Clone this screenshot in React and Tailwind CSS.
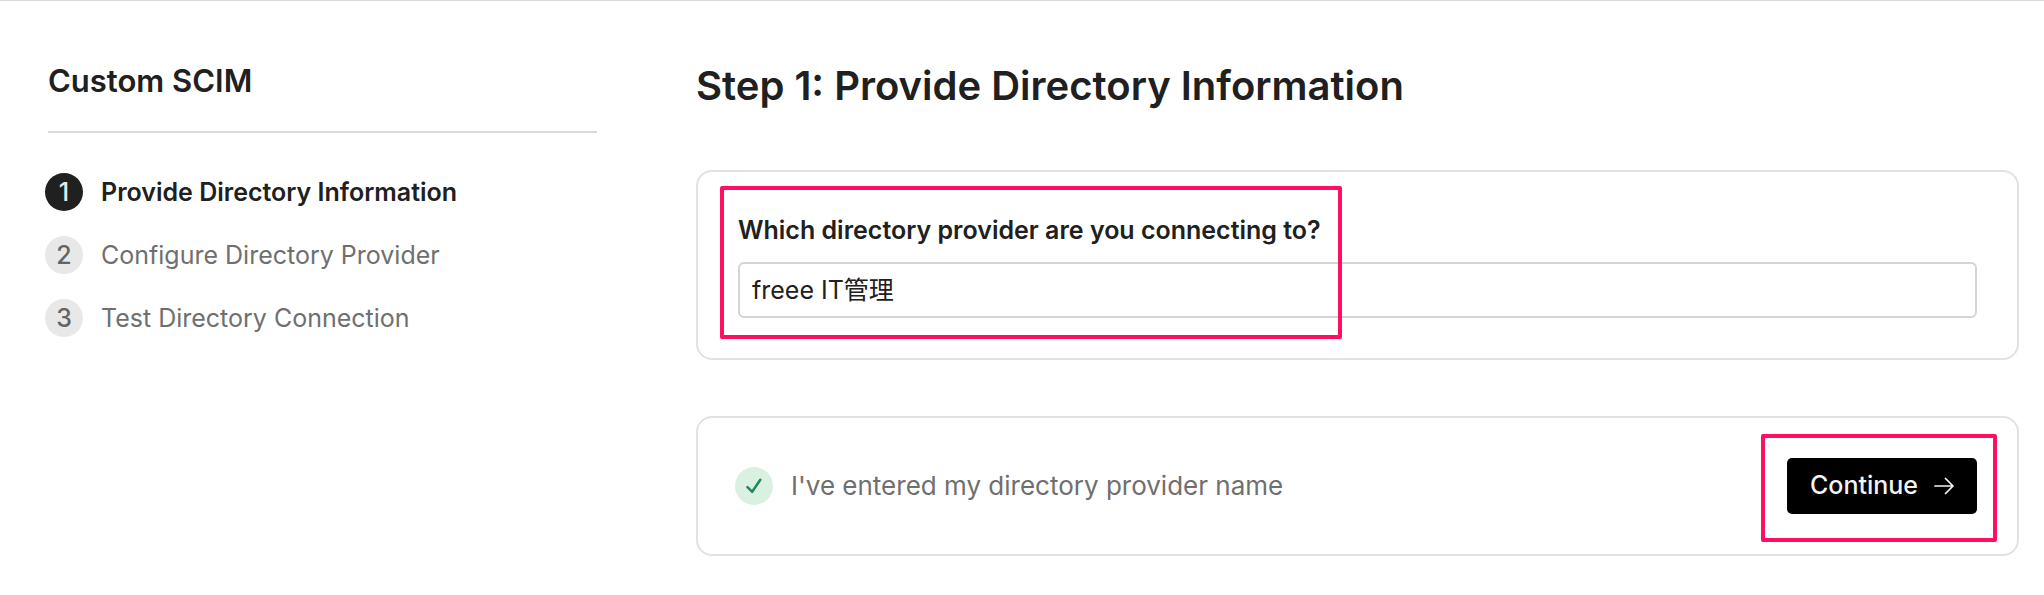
import React, { useState } from 'react';

const steps = [
  { number: 1, name: 'Provide Directory Information' },
  { number: 2, name: 'Configure Directory Provider' },
  { number: 3, name: 'Test Directory Connection' },
];

const StepLink = ({ step, active }) => (
  <a
    href={`#step-${step.number}`}
    aria-current={active ? 'step' : undefined}
    className={`flex items-center gap-[18px] text-[25px] leading-[38px] ${
      active ? 'font-semibold text-[#202020]' : 'text-[#6f6f6f]'
    }`}
  >
    <span
      className={`flex size-[38px] shrink-0 items-center justify-center rounded-full text-[25px] font-medium ${
        active ? 'bg-[#202020] text-[#e8e8e8]' : 'bg-[#e8e8e8] text-[#646464]'
      }`}
    >
      {step.number}
    </span>
    {step.name}
  </a>
);

const CheckBadge = () => (
  <span className="flex size-[38px] shrink-0 items-center justify-center rounded-full bg-[#daf1e1]">
    <svg viewBox="0 0 16 16" className="size-4" fill="none" stroke="#1c8a5d" strokeWidth="2.5" strokeLinecap="round" strokeLinejoin="round">
      <path d="M1.5 9.2 6.2 13.8 14.3 1.8" />
    </svg>
  </span>
);

const ArrowIcon = () => (
  <svg viewBox="0 0 20 18" className="h-[18px] w-5" fill="none" stroke="currentColor" strokeWidth="1.7" strokeLinecap="round" strokeLinejoin="round">
    <path d="M1 9H19M11.5 1.5 19 9l-7.5 7.5" />
  </svg>
);

const App = () => {
  const [provider, setProvider] = useState('freee IT管理');

  return (
    <div className="flex border-t border-[#d9d9d9] bg-white pr-[25px] pl-[45px] pb-10 font-['Inter','Noto_Sans_CJK_JP',sans-serif] text-[#202020]">
      {/* Sidebar */}
      <aside className="mr-[99px] w-[552px] shrink-0 pt-[59px]">
        <div className="ml-[3px] border-b-2 border-[#d9d9d9] pb-[29px]">
          <h2 className="text-[31px] leading-[42px] font-semibold">Custom SCIM</h2>
        </div>
        <nav className="mt-10 flex flex-col gap-[25px]">
          {steps.map((step) => (
            <StepLink key={step.number} step={step} active={step.number === 1} />
          ))}
        </nav>
      </aside>

      {/* Current step */}
      <main className="min-w-0 flex-1 pt-[59px]">
        <h1 className="text-[40px] leading-[52px] font-semibold">Step 1: Provide Directory Information</h1>

        <section className="relative mt-[58px] rounded-[16px] border-2 border-[#e2e2e2] p-10">
          <label htmlFor="provider" className="block text-[25px] leading-9 font-semibold">
            Which directory provider are you connecting to?
          </label>
          <input
            id="provider"
            type="text"
            value={provider}
            onChange={(e) => setProvider(e.target.value)}
            className="mt-[14px] block h-14 w-full rounded-[6px] border-2 border-[#d4d4d4] px-3 pb-1 text-[25px] outline-none"
          />
          <div className="pointer-events-none absolute top-[14px] left-[22px] h-[153px] w-[622px] rounded-[2px] border-4 border-[#ff0f5f]" />
        </section>

        <section className="mt-14 flex items-center justify-between rounded-[16px] border-2 border-[#e2e2e2] py-10 pr-10 pl-[37px]">
          <p className="flex items-center gap-[18px] text-[26px] leading-9 text-[#6f6f6f]">
            <CheckBadge />
            I've entered my directory provider name
          </p>
          <div className="relative">
            <button type="button" className="flex h-14 w-[190px] items-center justify-center gap-4 rounded-[5px] bg-black text-[25px] font-medium text-[#f4f4f4]">
              Continue
              <ArrowIcon />
            </button>
            <div className="pointer-events-none absolute -top-6 -right-5 h-[108px] w-[236px] rounded-[2px] border-4 border-[#ff0f5f]" />
          </div>
        </section>
      </main>
    </div>
  );
};

export default App;
